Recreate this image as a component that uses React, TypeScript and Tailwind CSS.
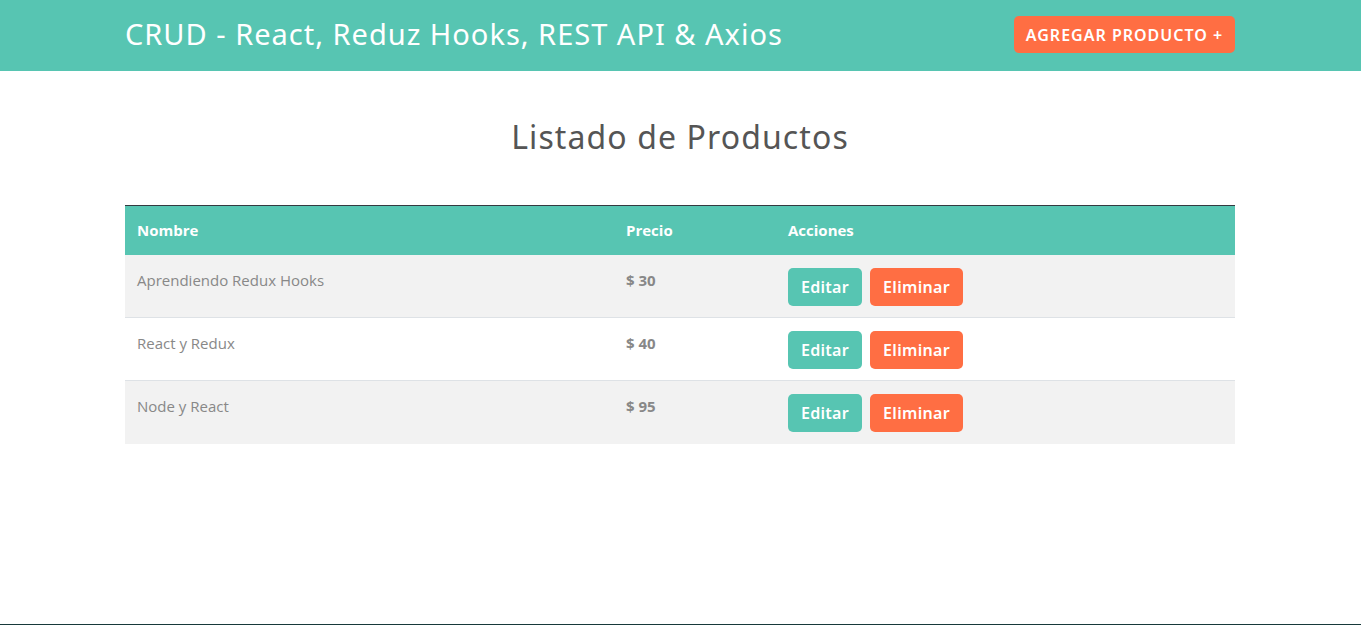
import React from "react";

const productos = [
  { nombre: "Aprendiendo Redux Hooks", precio: 30 },
  { nombre: "React y Redux", precio: 40 },
  { nombre: "Node y React", precio: 95 },
];

export default function App() {
  return (
    <div className="min-h-screen flex flex-col bg-white" style={{ fontFamily: "'Open Sans', 'Noto Sans', sans-serif" }}>
      <header className="bg-[#57c5b2] h-[71px] flex items-center">
        <div className="w-[1110px] ml-[125px] flex items-center justify-between">
          <h1 className="text-white text-[29px] font-normal leading-none tracking-[1px] -mt-[4px]" style={{ fontFamily: "'Noto Sans', sans-serif" }}>
            CRUD - React, Reduz Hooks, REST API &amp; Axios
          </h1>
          <button className="bg-[#ff6e43] text-white uppercase font-semibold text-[16px] h-[37px] w-[221px] rounded-[5px] tracking-[1px] -mt-[2px]" style={{ fontFamily: "'Noto Sans', sans-serif" }}>
            Agregar Producto +
          </button>
        </div>
      </header>
      <main className="flex-1 w-[1110px] ml-[125px]">
        <h2 className="text-center text-[32px] text-[#555] font-normal mt-[47px] mb-[49px] leading-[1.2] tracking-[1.1px]" style={{ fontFamily: "'Noto Sans', sans-serif" }}>
          Listado de Productos
        </h2>
        <table className="w-full border-collapse text-[15px]">
          <thead>
            <tr className="bg-[#57c5b2] text-white border-t border-[#343a40]">
              <th className="w-[489px] text-left font-bold px-3 h-[49px]">Nombre</th>
              <th className="w-[162px] text-left font-bold px-3">Precio</th>
              <th className="text-left font-bold px-3">Acciones</th>
            </tr>
          </thead>
          <tbody>
            {productos.map((p, i) => (
              <tr key={p.nombre} className={`${i % 2 === 0 ? "bg-[#f2f2f2]" : "bg-white"} ${i > 0 ? "border-t border-[#dee2e6]" : ""}`}>
                <td className="px-3 pt-[14px] pb-3 align-top text-[#888] h-[63px]">{p.nombre}</td>
                <td className="px-3 pt-[14px] pb-3 align-top text-[#888] font-bold">$ {p.precio}</td>
                <td className="px-3 pt-[13px] align-top">
                  <div className="flex gap-2" style={{ fontFamily: "'Noto Sans', sans-serif" }}>
                    <button className="bg-[#57c5b2] text-white font-semibold text-[16px] h-[38px] w-[74px] rounded-[5px] tracking-[0.3px]">Editar</button>
                    <button className="bg-[#ff6e43] text-white font-semibold text-[16px] h-[38px] w-[93px] rounded-[5px] tracking-[0.3px]">Eliminar</button>
                  </div>
                </td>
              </tr>
            ))}
          </tbody>
        </table>
      </main>
      <div className="h-px bg-[#17393a]" />
    </div>
  );
}
